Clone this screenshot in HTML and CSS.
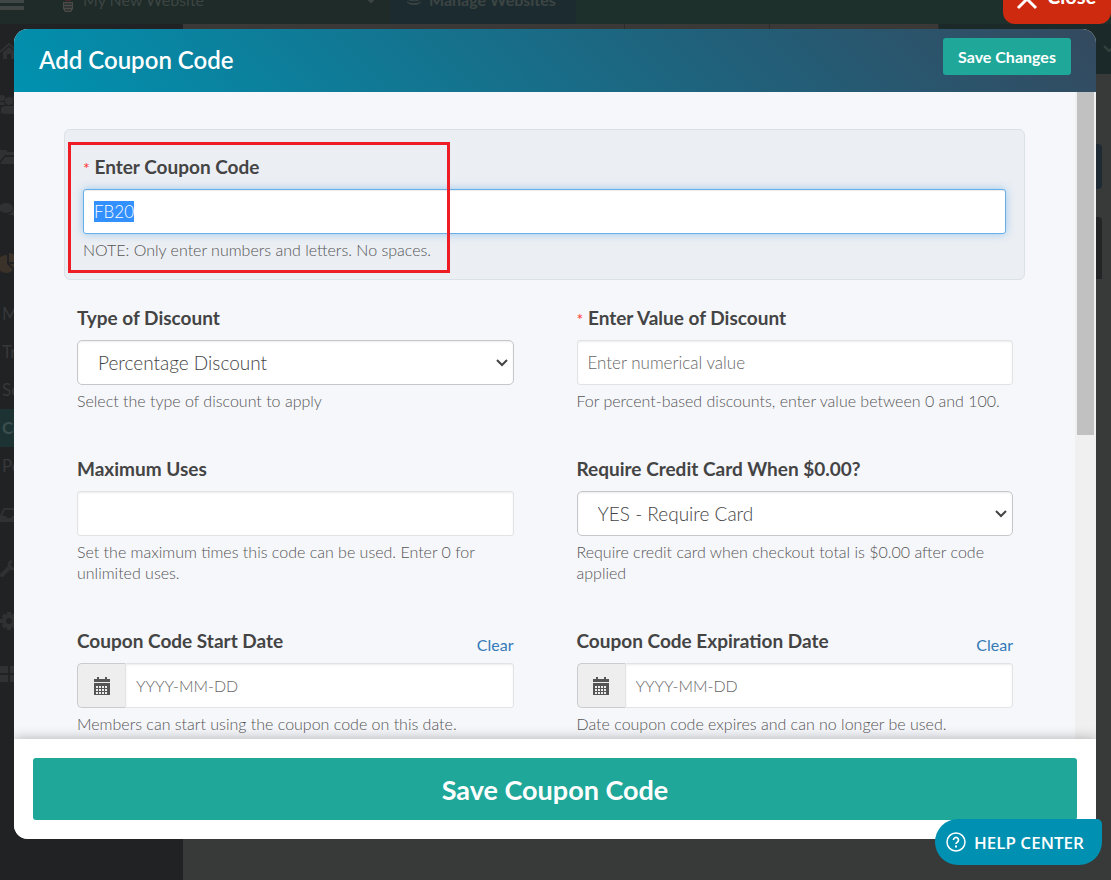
FILE: index.html
```html
<!DOCTYPE html>
<html lang="en">
<head>
<meta charset="utf-8">
<meta name="viewport" content="width=device-width, initial-scale=1">
<title>Add Coupon Code</title>
<link rel="stylesheet" href="styles.css">
</head>
<body>
<div class="app">
  <header class="topbar">
    <div class="site">
      <svg class="burger" width="24" height="20" viewBox="0 0 24 20"><path d="M0 2h24M0 9h24M0 16h24" stroke="currentColor" stroke-width="4"/></svg>
      <svg class="bulb" width="10" height="22" viewBox="0 0 10 22"><path d="M0 4a5 5 0 0 1 10 0c0 3-2 4-2 7H2C2 8 0 7 0 4z" fill="#4a2a2a"/><path d="M0 12h10v7l-2 3H2l-2-3z" fill="#4c4b48"/><path d="M1 14h8M1 17h8M2 20h6" stroke="#1b2523"/></svg>
      <span class="site-name">My New Website</span>
      <svg class="site-caret" width="10" height="7" viewBox="0 0 10 7"><path d="M1 1l4 4 4-4" fill="none" stroke="currentColor" stroke-width="2"/></svg>
    </div>
    <div class="manage">
      <svg width="14" height="18" viewBox="0 0 14 18" fill="currentColor"><ellipse cx="7" cy="3" rx="7" ry="3"/><path d="M0 5c2 3 12 3 14 0v3c-2 3-12 3-14 0zM0 10c2 3 12 3 14 0v1c-2 3-12 3-14 0zM0 13c2 3 12 3 14 0v1c-2 4-12 4-14 0z"/></svg>
      <span>Manage Websites</span>
    </div>
  </header>
  <div class="below">
    <nav class="sidebar">
      <span class="nav-icon"><svg width="18" height="16" viewBox="0 0 18 16" fill="currentColor"><path d="M9 4l6 5v7h-4v-5H7v5H3V9z"/><path d="M0 9l9-8 9 8" fill="none" stroke="currentColor" stroke-width="2"/></svg></span>
      <span class="nav-icon"><svg width="18" height="20" viewBox="0 0 18 20" fill="currentColor"><circle cx="2" cy="4" r="3"/><circle cx="9" cy="7" r="4"/><circle cx="16" cy="4" r="3"/><path d="M1 19v-4q0-3 4-3h8q4 0 4 3v4q-8 2-16 0zM-2 8h6l1 3H-2zM18 8h-4l-1 3h5z"/></svg></span>
      <span class="nav-icon"><svg width="20" height="16" viewBox="0 0 20 16" fill="currentColor"><path d="M0 1h6l2 2h8v3H5L0 12z"/><path d="M5 8h15l-4 7H0z"/></svg></span>
      <span class="nav-icon"><svg width="18" height="16" viewBox="0 0 18 16" fill="currentColor"><ellipse cx="6" cy="6" rx="7" ry="5"/><path d="M14 4c5 3 4 7 1 8l2 3-5-2H7c4-1 7-4 7-9z"/></svg></span>
      <span class="nav-icon nav-pie"><svg width="20" height="20" viewBox="0 0 20 20" fill="currentColor"><path d="M7 2v9l6 6A9 9 0 1 1 7 2z"/><path d="M9 0a9 9 0 0 1 9 9H9zM10 11h8q0 3-3 5z"/></svg></span>
      <div class="submenu">
        <span class="sub">M</span>
        <span class="sub">Tr</span>
        <span class="sub">Se</span>
        <span class="sub sub-active">Co</span>
        <span class="sub">Po</span>
      </div>
      <span class="nav-icon"><svg width="18" height="14" viewBox="0 0 18 14"><path d="M1 13V8l3-7h10l3 7v5z" fill="none" stroke="currentColor" stroke-width="2"/><path d="M1 8h5l1 2h4l1-2h5v5H1z" fill="currentColor"/></svg></span>
      <span class="nav-icon"><svg width="18" height="18" viewBox="0 0 18 18"><path d="M2 16l8-8" stroke="currentColor" stroke-width="4" stroke-linecap="round"/><path d="M17 5a4 4 0 1 1-5-3" fill="none" stroke="currentColor" stroke-width="3"/></svg></span>
      <span class="nav-icon"><svg width="18" height="18" viewBox="0 0 18 18" fill="none" stroke="currentColor"><circle cx="9" cy="9" r="5" stroke-width="4"/><path d="M9 0v3M9 15v3M0 9h3M15 9h3M3 3l2 2M13 13l2 2M3 15l2-2M13 5l2-2" stroke-width="4"/></svg></span>
      <span class="nav-icon"><svg width="18" height="16" viewBox="0 0 18 16" fill="currentColor"><path d="M0 0h8v7H0zM10 0h8v7h-8zM0 9h8v7H0zM10 9h8v7h-8z"/></svg></span>
    </nav>
    <div class="main">
      <div class="tabs"><span></span><span></span><span></span></div>
      <div class="rail">
        <div class="rail-top"><svg width="8" height="8" viewBox="0 0 8 8"><path d="M1 1l5 5 5-5" fill="none" stroke="currentColor" stroke-width="2"/></svg></div>
        <div class="rail-button"></div>
        <div class="rail-card"></div>
      </div>
    </div>
  </div>
</div>

<button class="close" type="button">
  <svg width="22" height="22" viewBox="0 0 22 22"><path d="M2 2l18 18M20 2L2 20" stroke="#fff" stroke-width="3"/></svg>
  <span>Close</span>
</button>

<form class="modal" role="dialog" aria-labelledby="modal-title">
  <header class="modal-head">
    <h1 id="modal-title">Add Coupon Code</h1>
    <button class="save-changes" type="button">Save Changes</button>
  </header>
  <div class="modal-body">
    <div class="scroll-area">
      <section class="panel">
        <label class="label" for="code"><span class="req">*</span> Enter Coupon Code</label>
        <input class="control control-focus" id="code" type="text" value="FB20">
        <p class="help">NOTE: Only enter numbers and letters. No spaces.</p>
        <div class="callout"></div>
      </section>
      <div class="fields">
        <div class="field">
          <label class="label" for="type">Type of Discount</label>
          <div class="select-wrap">
            <select class="control select" id="type"><option>Percentage Discount</option></select>
            <svg class="chevron" width="12" height="8" viewBox="0 0 12 8"><path d="M1 1l5 5 5-5" fill="none" stroke="#444" stroke-width="2"/></svg>
          </div>
          <p class="help">Select the type of discount to apply</p>
        </div>
        <div class="field">
          <label class="label" for="value"><span class="req">*</span> Enter Value of Discount</label>
          <input class="control" id="value" type="text" placeholder="Enter numerical value">
          <p class="help">For percent-based discounts, enter value between 0 and 100.</p>
        </div>
        <div class="field">
          <label class="label" for="max">Maximum Uses</label>
          <input class="control" id="max" type="text">
          <p class="help">Set the maximum times this code can be used. Enter 0 for unlimited uses.</p>
        </div>
        <div class="field">
          <label class="label" for="card">Require Credit Card When $0.00?</label>
          <div class="select-wrap">
            <select class="control select" id="card"><option>YES - Require Card</option></select>
            <svg class="chevron" width="12" height="8" viewBox="0 0 12 8"><path d="M1 1l5 5 5-5" fill="none" stroke="#444" stroke-width="2"/></svg>
          </div>
          <p class="help">Require credit card when checkout total is $0.00 after code applied</p>
        </div>
        <div class="field">
          <div class="label-row"><label class="label" for="start">Coupon Code Start Date</label><a class="clear" href="#">Clear</a></div>
          <div class="date">
            <span class="addon"><svg width="18" height="18" viewBox="0 0 18 18"><path d="M1 2h16v3H1zM4 0h2v3H4zM12 0h2v3h-2zM1 6h16v12H1z" fill="#555"/><path d="M3 10h12M3 13h12M3 16h12" stroke="#eee" stroke-width="2" stroke-dasharray="2 1"/></svg></span>
            <input class="control" id="start" type="text" placeholder="YYYY-MM-DD">
          </div>
          <p class="help">Members can start using the coupon code on this date.</p>
        </div>
        <div class="field">
          <div class="label-row"><label class="label" for="end">Coupon Code Expiration Date</label><a class="clear" href="#">Clear</a></div>
          <div class="date">
            <span class="addon"><svg width="18" height="18" viewBox="0 0 18 18"><path d="M1 2h16v3H1zM4 0h2v3H4zM12 0h2v3h-2zM1 6h16v12H1z" fill="#555"/><path d="M3 10h12M3 13h12M3 16h12" stroke="#eee" stroke-width="2" stroke-dasharray="2 1"/></svg></span>
            <input class="control" id="end" type="text" placeholder="YYYY-MM-DD">
          </div>
          <p class="help">Date coupon code expires and can no longer be used.</p>
        </div>
      </div>
    </div>
    <div class="track"><div class="thumb"></div></div>
  </div>
  <footer class="modal-foot">
    <button class="save" type="button">Save Coupon Code</button>
  </footer>
</form>

<button class="help-center" type="button">
  <svg width="20" height="20" viewBox="0 0 20 20" fill="none" stroke="#fff"><circle cx="10" cy="10" r="9" stroke-width="1.5"/><path d="M7.500 8a2.500 2.500 0 1 1 4 2c-1 .7-1.500 1-1.500 2" stroke-width="1.700"/><path d="M10 13.500v2" stroke-width="2"/></svg>
  <span>HELP CENTER</span>
</button>
<script src="script.js"></script>
</body>
</html>
```

FILE: styles.css
```css
* { box-sizing: border-box; }
body {
  margin: 0;
  height: 100vh;
  overflow: hidden;
  background: #383a39;
  color: #444;
  font-family: Lato, "Open Sans", sans-serif;
  font-size: 16px;
}
button, input, select { font-family: inherit; }
h1, p { margin: 0; }

/* dimmed application behind the dialog */
.app { height: 100%; display: flex; flex-direction: column; }
.topbar { height: 24px; flex: none; display: flex; background: #1e302b; color: #3d4543; }
.site, .manage { display: flex; align-items: flex-end; padding-bottom: 14px; font-size: 16px; line-height: 20px; }
.site { width: 390px; background: #1e2b28; }
.site-name { flex: 1; margin-left: 10px; }
.burger { margin-bottom: -2px; color: #3f4644; }
.bulb { margin: 0 0 -2px 39px; }
.site-caret { margin: 0 14px 6px 0; }
.manage { width: 186px; gap: 8px; padding-left: 17px; background: #1c2b30; font-weight: 700; white-space: nowrap; }
.manage svg { margin-bottom: 4px; }
.below { flex: 1; display: flex; min-height: 0; }
.sidebar { width: 183px; background: #212224; color: #2f3133; }
.nav-icon { height: 53px; display: flex; align-items: center; }
.nav-pie { color: #3b332a; }
.submenu { padding: 6px 0 3px; }
.sub { display: block; height: 38px; padding-left: 2px; line-height: 38px; font-size: 17px; color: #36383a; }
.sub-active { background: #1c3233; color: #3c4f50; font-weight: 700; }
.main { flex: 1; display: flex; background: #383a39; }
.tabs { flex: 1; height: 5px; display: grid; grid-template-columns: 442px 145px 1fr; background: #3a3938; }
.tabs span { border-right: 1px solid #2c2d2d; }
.rail { width: 172px; }
.rail-top { height: 50px; display: flex; align-items: center; justify-content: flex-end; background: #1b2a28; color: #35423f; }
.rail-button { height: 45px; margin: 70px 9px 0 0; border-radius: 4px; background: #1d2a33; }
.rail-card { height: 62px; margin: 28px 9px 0 0; border-radius: 4px 4px 0 0; background: #232425; }

.close {
  position: fixed; top: -40px; right: 0;
  width: 108px; height: 64px;
  display: flex; align-items: flex-end; gap: 9px;
  padding: 0 0 14px 13px;
  border: 0; border-radius: 0 0 12px 12px;
  background: #ce2a10; color: #fff;
  font-size: 20px; line-height: 24px; font-weight: 700;
}
.close span { margin-bottom: 2px; }

/* dialog */
.modal {
  position: fixed; inset: 29px 15px 41px 14px;
  display: flex; flex-direction: column;
  overflow: hidden;
  border-radius: 14px;
  background: #fff;
}
.modal-head {
  flex: none;
  display: flex; align-items: flex-start; justify-content: space-between;
  height: 63px; padding: 9px 25px;
  background: linear-gradient(45deg, #0092b0, #21607a 65%, #34495e);
  color: #fff;
}
h1 { font-size: 24px; line-height: 44px; font-weight: 600; }
.save-changes {
  width: 128px; height: 37px; padding: 0;
  border: 0; border-radius: 3px;
  background: #1fa79a; color: #fff;
  font-size: 16px; font-weight: 700;
}
.modal-body { flex: 1; min-height: 0; display: flex; background: #f5f7fb; }
.scroll-area { flex: 1; overflow: hidden; padding: 37px 50px; }
.track { width: 21px; padding: 0 2px; background: #f0f0f0; }
.thumb { height: 53%; background: #c1c1c1; }

.panel {
  position: relative;
  padding: 26px 18px 19px;
  border: 1px solid #dae2e8; border-radius: 6px;
  background: #ebeef3;
}
.callout {
  position: absolute; top: 12px; left: 3px;
  width: 382px; height: 131px;
  border: 3px solid #ee1c25;
  pointer-events: none;
}
.fields {
  display: grid; grid-template-columns: 1fr 1fr;
  gap: 47px 63px;
  padding: 27px 12px 0 13px;
}
.label { display: block; margin-bottom: 11px; font-size: 19px; line-height: 22px; font-weight: 700; color: #444; }
.req { color: #f33; font-weight: 400; font-size: 16px; line-height: 16px; }
.label-row { display: flex; justify-content: space-between; }
.clear { color: #337ab7; font-size: 16px; line-height: 30px; height: 22px; text-decoration: none; }
.control {
  display: block; width: 100%; height: 45px;
  padding: 0 10px;
  border: 1px solid #e2e3e5; border-radius: 3px;
  background: #fff; color: #555;
  box-shadow: inset 0 1px 2px rgba(0, 0, 0, .08);
  font-size: 17px; font-weight: 300;
  outline: 0;
}
.control::placeholder { color: #666; opacity: 1; }
.control-focus { border-color: #66afe9; box-shadow: inset 0 1px 1px rgba(0, 0, 0, .08), 0 0 8px rgba(102, 175, 233, .6); }
.control-focus::selection { background: #3390ff; color: #fff; }
.select-wrap { position: relative; }
.select { appearance: none; padding: 0 20px; border-color: #c5c7ca; border-radius: 5px; font-size: 19px; color: #444; }
.chevron { position: absolute; right: 6px; top: 19px; pointer-events: none; }
.help { margin-top: 5px; font-size: 16px; line-height: 21px; font-weight: 300; color: #555; }
.date { display: flex; }
.addon {
  flex: none; width: 48px; height: 45px;
  display: flex; align-items: center; justify-content: center;
  border: 1px solid #c9cbce; border-right: 0; border-radius: 5px 0 0 5px;
  background: #eee;
}
.date .control { border-radius: 0 3px 3px 0; font-size: 16px; }
.modal-foot { position: relative; flex: none; padding: 19px; background: #fff; box-shadow: 0 0 12px rgba(0, 0, 0, .3); }
.save {
  display: block; width: 100%; height: 62px;
  border: 0; border-radius: 3px;
  background: #1fa79a; color: #fff;
  font-size: 27px; font-weight: 700;
}
.help-center {
  position: fixed; right: 9px; bottom: 15px;
  width: 167px; height: 46px;
  display: flex; align-items: center; gap: 8px;
  padding: 0 0 0 11px;
  border: 0; border-radius: 23px 5px 23px 23px;
  background: #0090b2; color: #fff;
  font-family: "Open Sans", "Noto Sans", sans-serif;
  font-size: 17px; font-weight: 600; white-space: nowrap;
}
```

FILE: script.js
```js
const code = document.getElementById('code');
code.focus();
code.select();
```
